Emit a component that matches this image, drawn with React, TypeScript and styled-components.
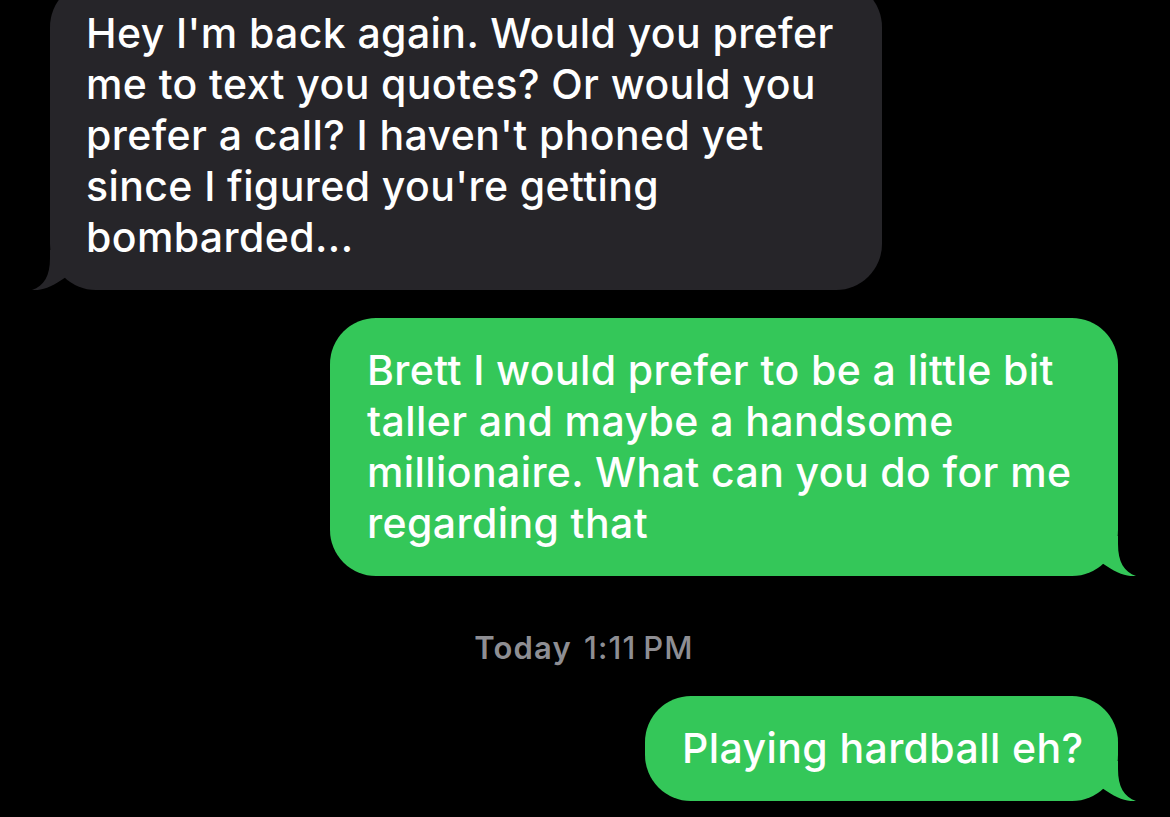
import React from 'react'
import styled, { createGlobalStyle, css } from 'styled-components'

const GlobalStyle = createGlobalStyle`
	html, body {
		margin: 0;
		padding: 0;
		background: #000;
		overflow: hidden;
	}
	body {
		font-family: Inter, "Noto Sans", "Liberation Sans", sans-serif;
		-webkit-font-smoothing: antialiased;
	}
`;

const Thread = styled.div`
	display: flex;
	flex-direction: column;
	padding: 0 52px 0 50px;
	height: 817px;
	overflow: hidden;
	background: #000;
`;

const Bubble = styled.div<{ $mine?: boolean; $width: number; $top: number }>`
	position: relative;
	box-sizing: border-box;
	width: ${p => p.$width}px;
	margin-top: ${p => p.$top}px;
	padding: 27px 36px 27px 36px;
	border-radius: 46px;
	font-size: 41px;
	font-weight: 500;
	line-height: 51px;
	letter-spacing: 0.4px;
	color: #fff;
	white-space: nowrap;
	${p => p.$mine
		? css`
			align-self: flex-end;
			background: #34c759;
			padding-left: 37px;
		`
		: css`
			align-self: flex-start;
			background: #262529;
		`}
`;

const Tail = styled.svg<{ $mine?: boolean }>`
	position: absolute;
	bottom: 0;
	width: 40px;
	height: 40px;
	${p => p.$mine
		? css`
			right: -20px;
		`
		: css`
			left: -20px;
			transform: scaleX(-1);
		`}
`;

const Stamp = styled.div`
	margin-top: 54px;
	align-self: center;
	font-size: 31px;
	line-height: 36px;
	color: #8e8e93;
	letter-spacing: 1.2px;
	word-spacing: 2px;
	b {
		font-weight: 600;
	}
	span {
		font-weight: 500;
	}
`;

type Msg = { lines: string[]; mine?: boolean; width: number; top: number }

function ChatBubble({ lines, mine, width, top }: Msg) {
	const fill = mine ? '#34c759' : '#262529'
	return (
		<Bubble $mine={mine} $width={width} $top={top}>
			{lines.map((l, i) => (
				<React.Fragment key={i}>
					{l}
					{i < lines.length - 1 && <br />}
				</React.Fragment>
			))}
			<Tail $mine={mine} viewBox="0 0 40 40">
				<path
					d="M0 0 L20 0 L20 8 C20 26 26 36 38 40 C29 41 18 37 4 27 L0 27 Z"
					fill={fill}
				/>
			</Tail>
		</Bubble>
	)
}

export default function App() {
	return (
		<>
			<GlobalStyle />
			<Thread>
				<ChatBubble
					width={832}
					top={-19}
					lines={[
						"Hey I'm back again. Would you prefer",
						'me to text you quotes? Or would you',
						"prefer a call? I haven't phoned yet",
						"since I figured you're getting",
						'bombarded...',
					]}
				/>
				<ChatBubble
					mine
					width={788}
					top={28}
					lines={[
						'Brett I would prefer to be a little bit',
						'taller and maybe a handsome',
						'millionaire. What can you do for me',
						'regarding that',
					]}
				/>
				<Stamp>
					<b>Today</b> <span>1:11&#8239;PM</span>
				</Stamp>
				<ChatBubble mine width={473} top={30} lines={['Playing hardball eh?']} />
			</Thread>
		</>
	)
}
